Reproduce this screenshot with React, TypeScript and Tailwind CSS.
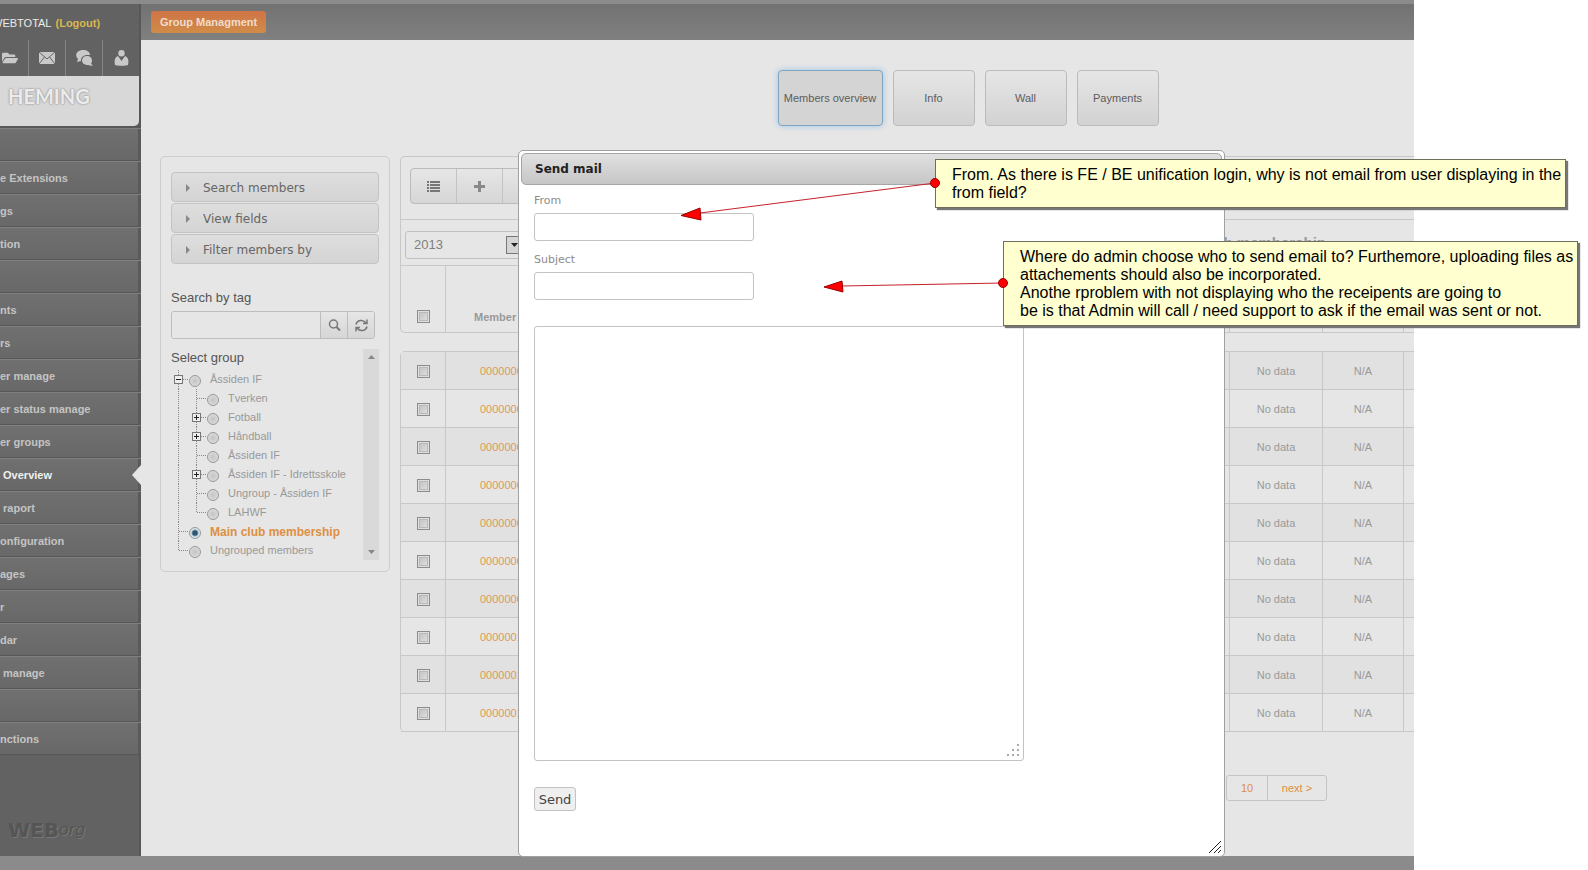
import { FaFolderOpen } from "react-icons/fa";

const NAV = [
  "",
  "e Extensions",
  "gs",
  "tion",
  "",
  "nts",
  "rs",
  "er manage",
  "er status manage",
  "er groups",
  " Overview",
  " raport",
  "onfiguration",
  "ages",
  "r",
  "dar",
  " manage",
  "",
  "nctions",
];

const ROWS = [
  "0000000",
  "0000000",
  "0000000",
  "0000000",
  "0000000",
  "0000000",
  "0000000",
  "0000001",
  "0000001",
  "0000001",
];

type Joint = "tee" | "end" | "plus" | "minus" | "bar";

const TREE: { label: string; cells: Joint[]; selected?: boolean }[] = [
  { label: "Åssiden IF", cells: ["minus"] },
  { label: "Tverken", cells: ["bar", "tee"] },
  { label: "Fotball", cells: ["bar", "plus"] },
  { label: "Håndball", cells: ["bar", "plus"] },
  { label: "Åssiden IF", cells: ["bar", "tee"] },
  { label: "Åssiden IF - Idrettsskole", cells: ["bar", "plus"] },
  { label: "Ungroup - Åssiden IF", cells: ["bar", "tee"] },
  { label: "LAHWF", cells: ["bar", "end"] },
  { label: "Main club membership", cells: ["tee"], selected: true },
  { label: "Ungrouped members", cells: ["end"] },
];

// ── Tree connector: one 18px cell of dotted line, with an optional +/- box ────
function TreeJoint({ kind }: { kind: Joint }) {
  const boxed = kind === "plus" || kind === "minus";
  return (
    <svg width="18" height="19" className="shrink-0" aria-hidden="true">
      <path d={kind === "end" ? "M7.5 0V10" : "M7.5 0V19"} stroke="#888" strokeDasharray="1 1" />
      {kind !== "bar" && <path d="M8 9.5H18" stroke="#888" strokeDasharray="1 1" />}
      {boxed && <rect x="3.5" y="5.5" width="8" height="8" fill="#eee" stroke="#777" />}
      {boxed && <path d="M5 9.5H10" stroke="#222" />}
      {kind === "plus" && <path d="M7.5 7V12" stroke="#222" />}
    </svg>
  );
}

function Tick({ label }: { label: string }) {
  return (
    <input
      type="checkbox"
      aria-label={label}
      className="block size-[13px] mx-auto appearance-none border border-[#8c8c8c] bg-linear-to-br from-[#bdbdbd] to-[#e4e4e4] shadow-[inset_0_0_0_1px_#dedede,inset_0_0_0_2px_#b9b9b9]"
    />
  );
}

// ── Left navigation ───────────────────────────────────────────────────────────
function Sidebar() {
  return (
    <aside className="w-[141px] shrink-0 overflow-hidden flex flex-col pr-0.5 bg-[#585858]">
      <div className="h-9 pt-0.5 flex items-center gap-1 whitespace-nowrap bg-[#626262] text-[11px]">
        <span className="-ml-2 text-[#ececec]">WEBTOTAL</span>
        <a href="#logout" className="font-bold text-[#d9b84e]">(Logout)</a>
      </div>

      <div className="h-9 flex bg-[#626262] text-[#c9c9c9]">
        <button aria-label="Files" className="w-[29px] flex items-center pl-0.5 border-r border-[#858585]">
          <FaFolderOpen size={16} />
        </button>
        <button aria-label="Mail" className="w-[37px] flex items-center justify-center border-r border-[#858585]">
          <svg width="16" height="12" viewBox="0 0 16 12">
            <rect width="16" height="12" fill="#c9c9c9" />
            <path d="M0 0L8 7L16 0M0 12L5.5 5M16 12L10.5 5" fill="none" stroke="#666" />
          </svg>
        </button>
        <button aria-label="Chat" className="w-[37px] flex items-center justify-center border-r border-[#858585]">
          <svg width="17" height="16" viewBox="0 0 17 16" fill="#c9c9c9">
            <path d="M7 0C11 0 14 2 14 5H12C8 5 5 7 5 10L5 11L1 12L2 9C-2 5 1 0 7 0Z" />
            <path d="M11 6C14 6 16 8 16 10.5C16 12 15.5 13 15 13.5L17 16L12 15C9 15 6 13.5 6 10.5C6 8 8 6 11 6Z" />
          </svg>
        </button>
        <button aria-label="Profile" className="flex-1 flex items-center justify-center">
          <svg width="15" height="16" viewBox="0 0 15 16" fill="#c9c9c9">
            <circle cx="7.5" cy="3.2" r="3.2" />
            <path d="M4 6L7.5 11L11 6C14 7 15 10 14 15C13 16 2 16 1 15C0 10 1 7 4 6Z" />
          </svg>
        </button>
      </div>

      <div className="h-[50px] pl-2 pt-1 rounded-br-[5px] bg-[#d8d8d8]">
        <span className="block font-['Lato'] text-[20px] leading-8 font-bold text-[#ececec] [text-shadow:0_0_2px_#999,0_0_2px_#999]">
          HEMING
        </span>
      </div>

      <nav className="pt-0.5 -mr-0.5">
        {NAV.map((label, i) => (
          <a
            key={i}
            href="#nav"
            className={
              "relative flex items-center h-[33px] pt-0.5 whitespace-pre border-t border-t-[#808080] border-b border-b-[#575757] bg-linear-to-b from-[#707070] to-[#686868] text-[11px] font-bold " +
              (label === " Overview" ? "text-[#f0f0f0]" : "text-[#c4c4c4]")
            }
          >
            {label}
            <i className="absolute right-0 top-0 w-[3px] h-full bg-[#5a5a5a]" />
            {label === " Overview" && (
              <svg width="9" height="20" viewBox="0 0 9 20" className="absolute right-0 top-1.5">
                <path d="M9 0V20L0 10Z" fill="#e6e6e6" />
              </svg>
            )}
          </a>
        ))}
      </nav>

      <div className="flex-1 flex items-end pb-2.5 pl-2 bg-[#626262] font-['DejaVu_Sans'] text-[20px] leading-8 text-[#555] [text-shadow:1px_1px_0_#777]">
        <b>WEB</b>
        <i className="text-[16px]">org</i>
      </div>
    </aside>
  );
}

// ── Member filters and group tree ─────────────────────────────────────────────
function FilterPanel() {
  return (
    <section className="w-[230px] shrink-0 px-2.5 pt-[15px] pb-[11px] border border-[#cdcdcd] rounded-[5px]">
      <div className="flex flex-col gap-px">
        {["Search members", "View fields", "Filter members by"].map((label) => (
          <button
            key={label}
            className="h-[30px] flex items-center gap-[13px] pl-3.5 pt-0.5 border border-[#c3c3c3] rounded-[4px] bg-linear-to-b from-[#dedede] to-[#d4d4d4] font-['DejaVu_Sans'] text-[12px] text-[#666]"
          >
            <svg width="4" height="8" viewBox="0 0 4 8">
              <path d="M0 0L4 4L0 8Z" fill="#888" />
            </svg>
            {label}
          </button>
        ))}
      </div>

      <label htmlFor="tag" className="block mt-6 text-[13px] leading-5 text-[#555]">Search by tag</label>
      <div className="flex h-7 w-[204px] mt-[3px] border border-[#bdbdbd] rounded-[3px] overflow-hidden">
        <input id="tag" className="flex-1 min-w-0 bg-[#e6e6e6] outline-none" />
        <button aria-label="Search" className="w-[27px] flex items-center justify-center border-l border-[#bdbdbd] bg-linear-to-b from-[#e6e6e6] to-[#d6d6d6]">
          <svg width="13" height="13" viewBox="0 0 13 13" fill="none" stroke="#777">
            <circle cx="5.5" cy="5" r="4" strokeWidth="1.5" />
            <path d="M8.5 8L12 11.5" strokeWidth="2" />
          </svg>
        </button>
        <button aria-label="Refresh" className="w-[27px] flex items-center justify-center border-l border-[#bdbdbd] bg-linear-to-b from-[#e6e6e6] to-[#d6d6d6]">
          <svg width="13" height="13" viewBox="0 0 13 13" fill="none" stroke="#777" strokeWidth="1.5">
            <path d="M1 5.500C2 1 8 0 11 4M12 0.500V4.500H8M12 7.500C11 12 5 13 2 9M1 12.500V8.500H5" />
          </svg>
        </button>
      </div>

      <div className="flex mt-2.5">
        <div className="flex-1 min-w-0">
          <h2 className="mb-1 text-[13px] leading-[17px] text-[#555]">Select group</h2>
          {TREE.map(({ label, cells, selected }, i) => (
            <div key={i} className="flex items-center h-[19px] whitespace-nowrap text-[11px]">
              {cells.map((kind, n) => (
                <TreeJoint key={n} kind={kind} />
              ))}
              <input
                type="radio"
                name="group"
                id={`group-${i}`}
                defaultChecked={selected}
                className="size-3 mt-[3px] mr-[9px] shrink-0 appearance-none rounded-full border border-[#999] bg-radial from-[#c4c4c4] to-[#e2e2e2] checked:from-[#2c5876] checked:from-30% checked:to-[#d8e2e8] checked:to-55%"
              />
              <label
                htmlFor={`group-${i}`}
                className={selected ? "text-[12px] font-bold text-[#dd8f42]" : "text-[#999]"}
              >
                {label}
              </label>
            </div>
          ))}
        </div>
        <div className="w-4 flex flex-col items-center justify-between py-1.5 bg-[#d9d9d9]">
          <svg width="7" height="4"><path d="M0 4L3.5 0L7 4Z" fill="#888" /></svg>
          <svg width="7" height="4"><path d="M0 0L3.5 4L7 0Z" fill="#888" /></svg>
        </div>
      </div>
    </section>
  );
}

function Columns() {
  return (
    <colgroup>
      <col className="w-[45px]" />
      <col />
      <col className="w-[93px]" />
      <col className="w-[81px]" />
      <col className="w-2.5" />
    </colgroup>
  );
}

// ── Members list behind the dialog ────────────────────────────────────────────
function MembersPanel() {
  return (
    <section className="flex-1 min-w-0 text-[11px] text-[#999]">
      <div className="border border-r-0 border-[#c8c8c8] rounded-l-[5px]">
        <div className="pt-[11px] pb-3.5 pl-[9px] border-b border-[#c8c8c8]">
          <div className="flex w-[140px] h-9 mb-px border border-[#bbb] rounded-[4px] bg-linear-to-b from-[#e6e6e6] to-[#d6d6d6]">
            <button aria-label="List" className="w-[46px] flex items-center justify-center border-r border-[#c3c3c3]">
              <svg width="13" height="11" viewBox="0 0 13 11" stroke="#777" strokeWidth="2">
                <path d="M0 1H2M3 1H13M0 4H2M3 4H13M0 7H2M3 7H13M0 10H2M3 10H13" />
              </svg>
            </button>
            <button aria-label="Add" className="w-[46px] flex items-center justify-center border-r border-[#c3c3c3]">
              <svg width="11" height="11" viewBox="0 0 11 11" stroke="#888" strokeWidth="3">
                <path d="M5.5 0V11M0 5.5H11" />
              </svg>
            </button>
          </div>
        </div>

        <div className="flex justify-between pt-[11px] pb-1.5 pl-1 pr-[88px] border-b border-[#c8c8c8]">
          <div className="relative">
            <select
              aria-label="Year"
              className="w-[122px] h-7 pl-2 appearance-none border border-[#c0c0c0] rounded-[3px] text-[13px] text-[#808080]"
            >
              <option>2013</option>
            </select>
            <span className="pointer-events-none absolute right-1 top-[5px] w-[17px] h-[18px] flex items-center justify-center border border-[#777] bg-[#d5d5d5]">
              <svg width="7" height="4"><path d="M0 0L3.5 4L7 0Z" fill="#222" /></svg>
            </span>
          </div>
          <h2 className="text-[15px] leading-6 font-bold">b membership</h2>
        </div>

        <table className="w-full table-fixed border-separate border-spacing-0">
          <Columns />
          <thead>
            <tr className="h-[66px] align-bottom *:border-r *:border-[#c8c8c8] *:last:border-r-0">
              <th className="pb-[9px]"><Tick label="Select all" /></th>
              <th className="pb-[7px] pl-7 text-left">Member</th>
              <th />
              <th />
              <th />
            </tr>
          </thead>
        </table>
      </div>

      <div className="mt-[18px] border border-r-0 border-b-0 border-[#c8c8c8] rounded-l-[5px]">
        <table className="w-full table-fixed border-separate border-spacing-0">
          <Columns />
          <tbody>
            {ROWS.map((no, i) => (
              <tr
                key={i}
                className="h-[38px] odd:bg-[#e1e1e1] text-center *:pt-0.5 *:border-b *:border-r *:border-[#c8c8c8] *:last:border-r-0"
              >
                <td><Tick label="Select member" /></td>
                <td className="pl-[34px] text-left text-[#de9a57]">{no}</td>
                <td>No data</td>
                <td>N/A</td>
                <td />
              </tr>
            ))}
          </tbody>
        </table>
      </div>

      <div className="flex justify-end mt-[43px] pr-[87px] text-[#dd8f42]">
        <div className="flex h-[26px] border border-[#c4c4c4] rounded-[3px]">
          <a href="#10" className="w-[41px] flex items-center justify-center border-r border-[#c4c4c4]">10</a>
          <a href="#next" className="w-[58px] flex items-center justify-center">next &gt;</a>
        </div>
      </div>
    </section>
  );
}

// ── Send mail dialog ──────────────────────────────────────────────────────────
function MailDialog() {
  return (
    <form
      role="dialog"
      aria-label="Send mail"
      className="absolute left-[377px] top-[110px] w-[707px] p-0.5 pb-[45px] flex flex-col items-start border border-[#a0a0a0] rounded-[5px] bg-white font-['DejaVu_Sans'] text-[11px] leading-4 text-[#8c8c8c]"
    >
      <h1 className="w-full h-8 px-[13px] flex items-center border border-[#a6a6a6] rounded-[5px] bg-linear-to-b from-[#e0e0e0] to-[#c6c6c6] text-[12px] font-bold text-[#222]">
        Send mail
      </h1>
      <div className="flex flex-col items-start pl-[13px] pt-2">
        <label htmlFor="from">From</label>
        <input id="from" className="w-[220px] h-7 mt-1 mb-[11px] px-2 border border-[#c3c3c3] rounded-[3px]" />
        <label htmlFor="subject">Subject</label>
        <input id="subject" className="w-[220px] h-7 mt-1 px-2 border border-[#c3c3c3] rounded-[3px]" />
        <div className="relative mt-[26px]">
          <textarea
            aria-label="Message"
            className="block w-[490px] h-[435px] p-2 resize-none border border-[#c3c3c3] rounded-[3px]"
          />
          <svg width="12" height="12" viewBox="0 0 12 12" fill="#aaa" className="absolute right-[5px] bottom-[5px]">
            <path d="M10 0h2v2h-2zM5 5h2v2h-2zM10 5h2v2h-2zM0 10h2v2h-2zM5 10h2v2h-2zM10 10h2v2h-2z" />
          </svg>
        </div>
        <button
          type="button"
          className="w-[42px] h-6 mt-[26px] pt-px border border-[#c3c3c3] rounded-[3px] bg-[#efefef] text-[13px] text-[#444]"
        >
          Send
        </button>
      </div>
      <svg width="12" height="12" viewBox="0 0 12 12" stroke="#222" className="absolute right-[3px] bottom-[3px]">
        <path d="M0 12L12 0M5 12L12 5M9 12L12 9" />
      </svg>
    </form>
  );
}

// ── Review notes on top of the page ───────────────────────────────────────────
function Notes() {
  const note =
    "absolute border border-[#6e6e5a] bg-[#ffffcf] pl-4 pt-1.5 text-[16px] leading-[18px] text-black whitespace-nowrap shadow-[2px_2px_1px_#777]";
  return (
    <>
      <div className={note + " left-[935px] top-[159px] w-[631px] h-[49px]"}>
        From. As there is FE / BE unification login, why is not email from user displaying in the
        <br />
        from field?
      </div>
      <div className={note + " left-[1003px] top-[241px] w-[575px] h-[85px]"}>
        Where do admin choose who to send email to? Furthemore, uploading files as
        <br />
        attachements should also be incorporated.
        <br />
        Anothe rproblem with not displaying who the receipents are going to
        <br />
        be is that Admin will call / need support to ask if the email was sent or not.
      </div>
      <svg width="400" height="130" className="absolute left-[670px] top-[170px] pointer-events-none" aria-hidden="true">
        <g stroke="#c8202c" fill="none">
          <path d="M30 43L265 13" />
          <path d="M172 116L333 113" />
        </g>
        <g stroke="#900" fill="#f00">
          <path d="M11 45.5L30 38L31 50Z" />
          <path d="M154 117L172 111L173 122Z" />
          <circle cx="265" cy="13" r="4.5" />
          <circle cx="333" cy="113" r="4.5" />
        </g>
      </svg>
    </>
  );
}

export default function App() {
  return (
    <div className="relative min-h-screen flex flex-col overflow-hidden bg-white pr-[174px] font-['Liberation_Sans',sans-serif]">
      <div className="h-1 bg-[#8b8b8b]" />
      <div className="flex-1 flex">
        <Sidebar />
        <div className="flex-1 min-w-0 flex flex-col">
          <header className="h-9 flex items-center pl-2.5 bg-linear-to-b from-[#727272] to-[#808080]">
            <button className="h-[22px] px-[9px] rounded-[3px] bg-linear-to-b from-[#cf7446] to-[#d08c48] text-[11px] font-bold text-[#f0dccb]">
              Group Managment
            </button>
          </header>

          <main className="relative flex-1 bg-[#e6e6e6]">
            <div className="pl-[50%] py-[30px] flex gap-2.5 text-[11px] text-[#5c5c5c]">
              <button className="w-[105px] h-14 border border-[#7fa5c4] rounded-[4px] bg-[#d4d4d4] shadow-[0_0_6px_#9cc3e4]">
                Members overview
              </button>
              {["Info", "Wall", "Payments"].map((label) => (
                <button
                  key={label}
                  className="w-[82px] h-14 border border-[#bbb] rounded-[4px] bg-linear-to-b from-[#e6e6e6] to-[#d2d2d2]"
                >
                  {label}
                </button>
              ))}
            </div>
            <div className="flex items-start gap-2.5 pl-[19px]">
              <FilterPanel />
              <MembersPanel />
            </div>
            <MailDialog />
          </main>
        </div>
      </div>
      <div className="h-3.5 bg-[#8b8b8b]" />
      <Notes />
    </div>
  );
}
